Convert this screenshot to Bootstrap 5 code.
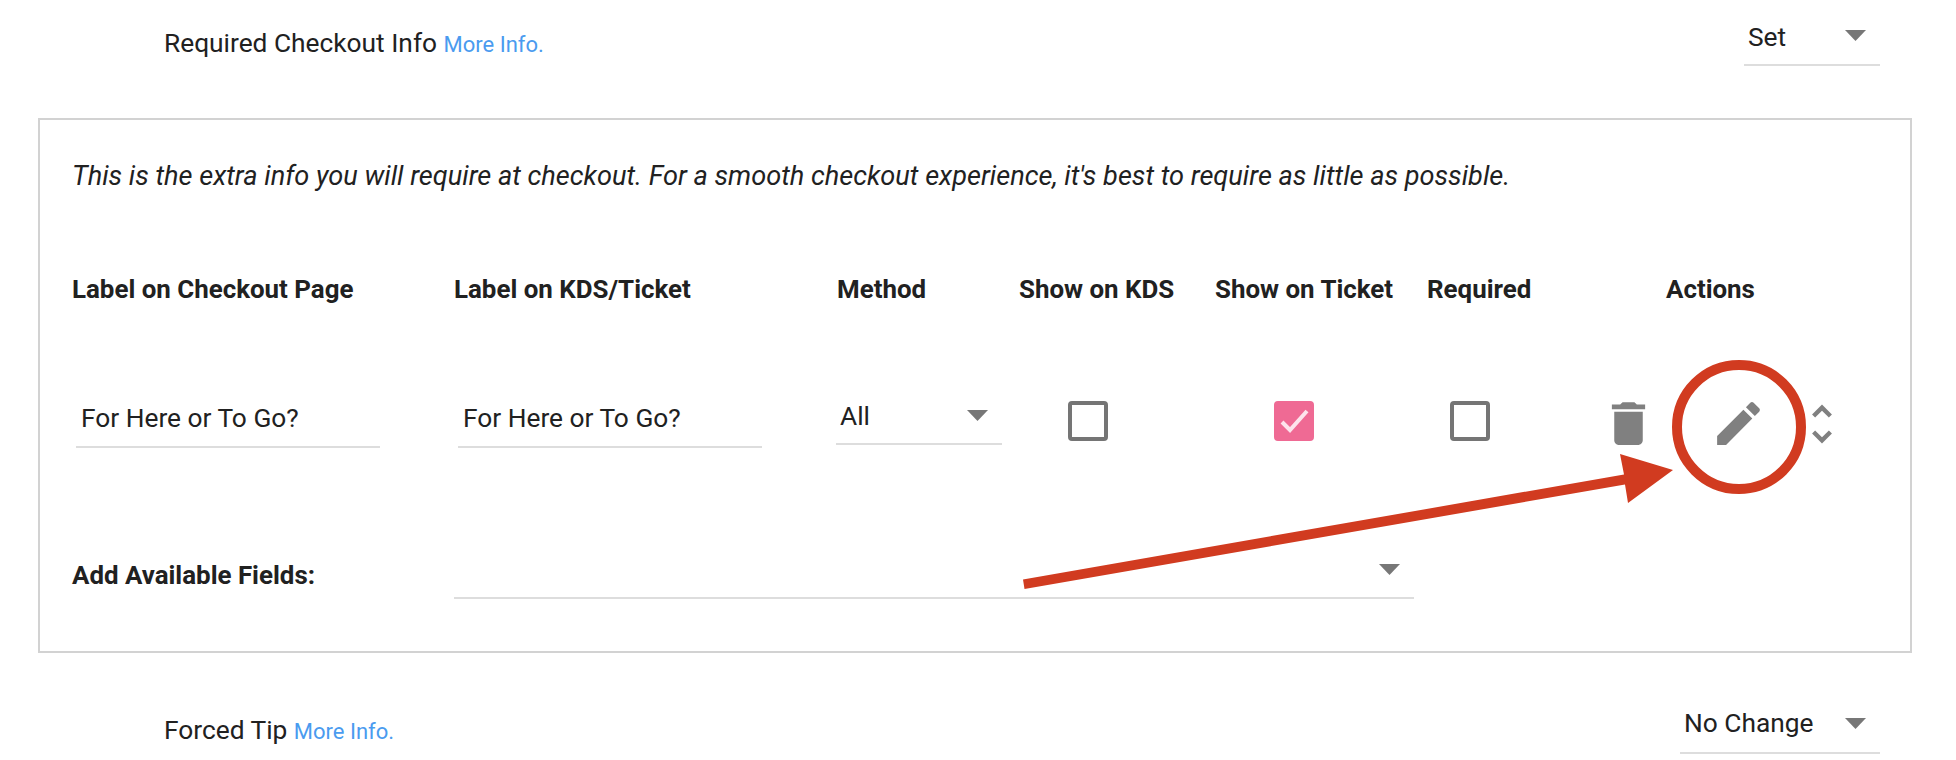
<!DOCTYPE html>
<html lang="en">
<head>
  <meta charset="UTF-8">
  <title>Required Checkout Info</title>
  <link href="https://cdn.jsdelivr.net/npm/bootstrap@5.3.3/dist/css/bootstrap.min.css" rel="stylesheet">
  <style>
    body {
      background: #fff;
      color: #212121;
      font-family: Roboto, "Liberation Sans", sans-serif;
      font-size: 26.3px;
      line-height: 36px;
    }

    .page-wrap {
      position: relative;
      height: 760px;
      overflow: hidden;
      padding-top: 14px;
    }

    .setting-row {
      padding: 0 76px 0 164px;
    }

    .setting-label {
      margin-bottom: 3px;
    }

    .setting-label-low {
      margin-bottom: 4px;
    }

    .more-link {
      color: #4a9bef;
      font-size: 22px;
      text-decoration: none;
    }

    .info-box {
      margin: 52px 44px 49px 38px;
      padding: 38px 0 52px 32px;
      border: 2px solid #d2d2d2;
    }

    .note-line {
      font-size: 27.15px;
      font-style: italic;
      margin-bottom: 77px;
    }

    .fields-grid {
      display: grid;
      grid-template-columns: 382px 383px 182px 196px 212px 173px 1fr;
    }

    .col-head {
      font-size: 25.9px;
      font-weight: 700;
      margin-bottom: 87px;
    }

    .actions-head {
      padding-left: 66px;
    }

    .line-input.form-control,
    .line-select.form-select {
      height: 52px;
      border: 0;
      border-bottom: 2px solid #ddd;
      border-radius: 0;
      box-shadow: none;
      color: #212121;
      font-family: Roboto, "Liberation Sans", sans-serif;
      font-size: 26.3px;
      line-height: 36px;
      background-color: transparent;
    }

    .line-input.form-control {
      width: 304px;
      height: 54px;
      padding: 0 5px 5px;
      margin-left: 4px;
    }

    .line-select.form-select {
      padding: 2px 40px 6px 4px;
      background-image: url("data:image/svg+xml,%3csvg xmlns='http://www.w3.org/2000/svg' viewBox='0 0 21 11'%3e%3cpath fill='%23777' d='M0 0h21L10.5 11z'/%3e%3c/svg%3e");
      background-size: 21px 11px;
      background-position: right 14px top 16px;
      background-repeat: no-repeat;
    }

    .select-set { width: 136px; }
    .line-select.select-nochange { width: 200px; padding-top: 1px; padding-bottom: 9px; }
    .line-select.select-method { width: 166px; margin-left: -1px; padding-top: 2px; padding-bottom: 6px; background-position: right 14px top 17px; }
    .line-select.select-fields { width: 960px; background-position: right 14px top 17px; }

    .tick-box.form-check-input {
      display: block;
      width: 40px;
      height: 40px;
      margin: 7px 0 0;
      border: 4px solid #757575;
      border-radius: 4px;
      box-shadow: none;
      background-color: #fff;
    }

    .tick-box.form-check-input:checked {
      border-color: #ef6a94;
      background-color: #ef6a94;
      background-image: url("data:image/svg+xml,%3csvg xmlns='http://www.w3.org/2000/svg' viewBox='0 0 40 40'%3e%3cpath fill='none' stroke='%23fde4ec' stroke-width='4' d='M8 21l8 8 17-19'/%3e%3c/svg%3e");
      background-size: 40px 40px;
      background-origin: border-box;
    }

    .cell-method { margin-top: -1px; }
    .cell-kds { padding-left: 49px; }
    .cell-ticket { padding-left: 59px; }
    .cell-required { padding-left: 23px; }

    .action-icons { margin-top: 1px; }
    .action-icons svg { fill: #808080; flex: none; }
    .action-icons .icon-big { width: 57px; height: 57px; }
    .action-icons .icon-sort { width: 52px; height: 52px; margin-left: 29px; }
    .action-icons .icon-big + .icon-big { margin-left: 53px; }

    .add-label {
      width: 382px;
      font-size: 25.9px;
      font-weight: 700;
      margin-top: 10px;
    }

    .add-row { margin-top: 95px; }

    .note-overlay {
      position: absolute;
      left: 0;
      top: 0;
      width: 1956px;
      height: 760px;
      pointer-events: none;
    }
  </style>
</head>
<body>

  <div class="page-wrap">

    <div class="setting-row d-flex justify-content-between align-items-end">
      <div class="setting-label">Required Checkout Info <a href="#" class="more-link">More Info.</a></div>
      <select class="form-select line-select select-set"><option>Set</option></select>
    </div>

    <div class="info-box">
      <div class="note-line">This is the extra info you will require at checkout. For a smooth checkout experience, it's best to require as little as possible.</div>

      <div class="fields-grid">
        <div class="col-head">Label on Checkout Page</div>
        <div class="col-head">Label on KDS/Ticket</div>
        <div class="col-head">Method</div>
        <div class="col-head">Show on KDS</div>
        <div class="col-head">Show on Ticket</div>
        <div class="col-head">Required</div>
        <div class="col-head actions-head">Actions</div>

        <div><input type="text" class="form-control line-input" value="For Here or To Go?" readonly></div>
        <div><input type="text" class="form-control line-input" value="For Here or To Go?" readonly></div>
        <div class="cell-method"><select class="form-select line-select select-method"><option>All</option></select></div>
        <div class="cell-kds"><input class="form-check-input tick-box" type="checkbox"></div>
        <div class="cell-ticket"><input class="form-check-input tick-box" type="checkbox" checked></div>
        <div class="cell-required"><input class="form-check-input tick-box" type="checkbox"></div>
        <div class="action-icons d-flex align-items-center">
          <svg class="icon-big" viewBox="0 0 24 24"><path d="M6 19c0 1.1.9 2 2 2h8c1.1 0 2-.9 2-2V7H6v12zM19 4h-3.5l-1-1h-5l-1 1H5v2h14V4z"/></svg>
          <svg class="icon-big" viewBox="0 0 24 24"><path d="M3 17.25V21h3.75L17.81 9.94l-3.75-3.75L3 17.25zM20.71 7.04c.39-.39.39-1.02 0-1.41l-2.34-2.34c-.39-.39-1.02-.39-1.41 0l-1.83 1.83 3.75 3.75 1.83-1.83z"/></svg>
          <svg class="icon-sort" viewBox="0 0 24 24"><path d="M12 5.83L15.17 9l1.41-1.41L12 3 7.41 7.59 8.83 9 12 5.83zm0 12.34L8.83 15l-1.41 1.41L12 21l4.59-4.59L15.17 15 12 18.17z"/></svg>
        </div>
      </div>

      <div class="add-row d-flex align-items-start">
        <div class="add-label">Add Available Fields:</div>
        <select class="form-select line-select select-fields"><option></option></select>
      </div>
    </div>

    <div class="setting-row d-flex justify-content-between align-items-end">
      <div class="setting-label-low">Forced Tip <a href="#" class="more-link">More Info.</a></div>
      <select class="form-select line-select select-nochange"><option>No Change</option></select>
    </div>

    <!-- red annotation drawn over the form -->
    <svg class="note-overlay" viewBox="0 0 1956 760">
      <circle cx="1739" cy="427" r="62" fill="none" stroke="#d13b20" stroke-width="10"/>
      <path fill="#d13b20" d="M1023 579.5L1624 474.5L1620 454L1673 470L1628 503L1625 484.5L1024.500 589z"/>
    </svg>

  </div>

</body>
</html>
